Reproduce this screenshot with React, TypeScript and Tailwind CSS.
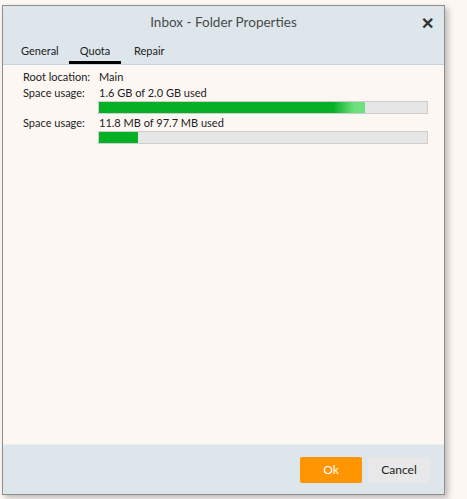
import React from "react";

export default function App() {
  const font = { fontFamily: 'Lato, "Noto Sans", Arial, sans-serif' };
  return (
    <div className="w-[467px] h-[499px] bg-[#fcf7f3] pt-[5px] pl-[2px]" style={font}>
      <div className="w-[443px] h-[490px] border border-[#8f8f8f] flex flex-col shadow-[3px_3px_6px_rgba(0,0,0,0.25)] bg-[#fcf7f3]">
        <div className="bg-[#dce6eb] border-b border-[#c9d3d8]">
          <div className="relative h-[32px] flex items-center justify-center text-[13.5px] text-[#4a4a4a] pt-[1px]">
            Inbox - Folder Properties
            <span className="absolute right-[10px] top-[5px] text-[16px] font-bold text-[#333]">✕</span>
          </div>
          <div className="flex h-[26px] text-[11px] text-[#222] pl-[7px]">
            <div className="w-[59px] pl-[11px] flex items-center whitespace-nowrap">General</div>
            <div className="w-[52px] flex items-center justify-center border-b-[3px] border-black pt-[3px] whitespace-nowrap">Quota</div>
            <div className="px-[13px] flex items-center whitespace-nowrap">Repair</div>
          </div>
        </div>
        <div className="flex-1 pl-[20px] pr-[16px] pt-[4px] text-[11px] text-[#222] leading-[16px]">
          <div className="flex whitespace-nowrap">
            <div className="w-[76px] shrink-0">Root location:</div>
            <div>Main</div>
          </div>
          <div className="flex whitespace-nowrap">
            <div className="w-[76px] shrink-0">Space usage:</div>
            <div>1.6 GB of 2.0 GB used</div>
          </div>
          <div className="ml-[75px] h-[13px] bg-[#e6e6e6] border border-[#cdcdcd] mb-[1px] relative">
            <div className="absolute left-0 top-0 bottom-0 w-[81%] bg-[linear-gradient(to_right,#06b025_0%,#06b025_88%,#6fe07e_96%,#6fe07e_100%)]" />
          </div>
          <div className="flex whitespace-nowrap">
            <div className="w-[76px] shrink-0">Space usage:</div>
            <div>11.8 MB of 97.7 MB used</div>
          </div>
          <div className="ml-[75px] h-[13px] bg-[#e6e6e6] border border-[#cdcdcd] relative">
            <div className="absolute left-0 top-0 bottom-0 w-[12%] bg-[#06b025]" />
          </div>
        </div>
        <div className="h-[50px] bg-[#dce6eb] border-t border-[#e9eef0] flex items-center justify-end gap-[6px] pr-[14px] text-[12px]">
          <button className="w-[62px] h-[26px] bg-[#ff9500] text-white rounded-[2px]">Ok</button>
          <button className="w-[62px] h-[26px] bg-[#e8e8e8] text-[#222] rounded-[2px]">Cancel</button>
        </div>
      </div>
    </div>
  );
}
